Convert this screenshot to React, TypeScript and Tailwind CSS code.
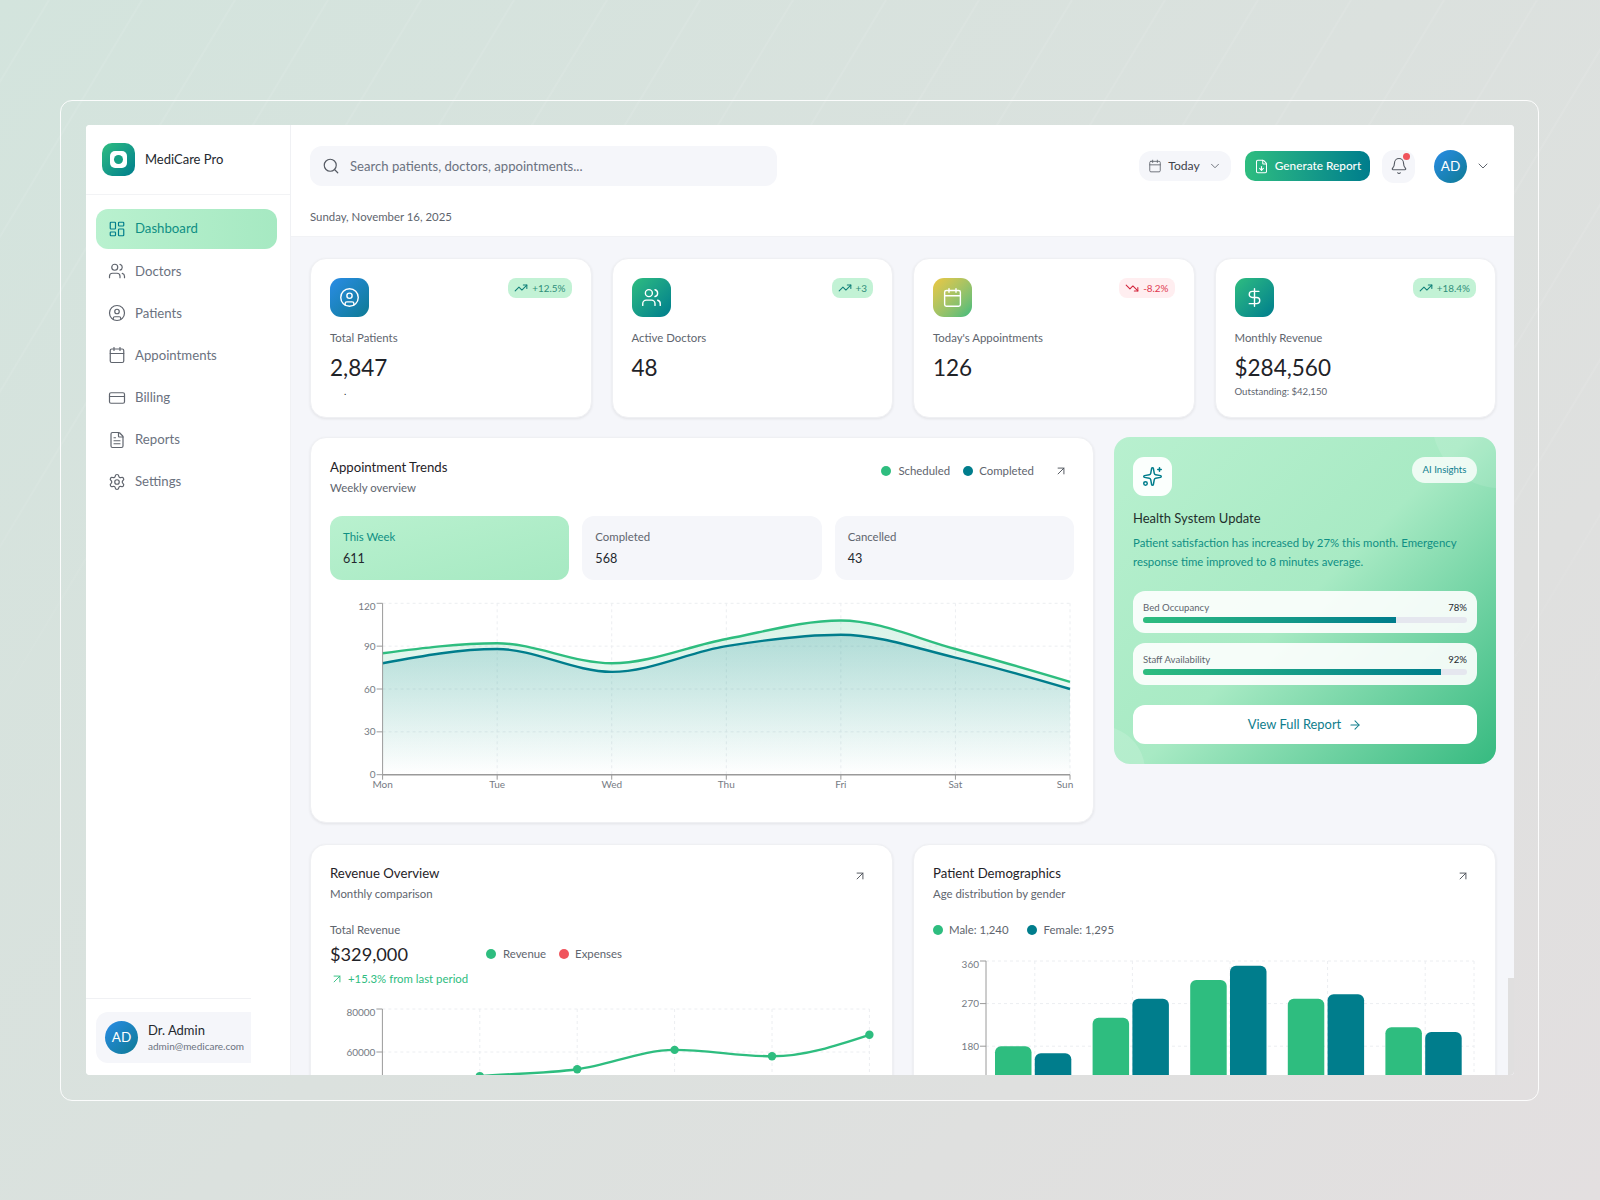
import React from "react";
import {
  LayoutDashboard, Users, CircleUser, Calendar, CreditCard, FileText, Settings, Search, ChevronDown,
  FileDown, Bell, TrendingUp, TrendingDown, DollarSign, Sparkles, ArrowUpRight, ArrowRight,
} from "lucide-react";

type P = [number, number];
function monotone(pts: P[]): string {
  const n = pts.length;
  const t: number[] = new Array(n).fill(0);
  const sign = (v: number) => (v < 0 ? -1 : 1);
  for (let i = 1; i < n - 1; i++) {
    const h0 = pts[i][0] - pts[i - 1][0], h1 = pts[i + 1][0] - pts[i][0];
    const s0 = (pts[i][1] - pts[i - 1][1]) / h0, s1 = (pts[i + 1][1] - pts[i][1]) / h1;
    const p = (s0 * h1 + s1 * h0) / (h0 + h1);
    t[i] = (sign(s0) + sign(s1)) * Math.min(Math.abs(s0), Math.abs(s1), 0.5 * Math.abs(p)) || 0;
  }
  t[0] = (3 * (pts[1][1] - pts[0][1]) / (pts[1][0] - pts[0][0]) - t[1]) / 2;
  t[n - 1] = (3 * (pts[n - 1][1] - pts[n - 2][1]) / (pts[n - 1][0] - pts[n - 2][0]) - t[n - 2]) / 2;
  let d = `M${pts[0][0]},${pts[0][1]}`;
  for (let i = 0; i < n - 1; i++) {
    const dx = (pts[i + 1][0] - pts[i][0]) / 3;
    d += `C${pts[i][0] + dx},${pts[i][1] + dx * t[i]},${pts[i + 1][0] - dx},${pts[i + 1][1] - dx * t[i + 1]},${pts[i + 1][0]},${pts[i + 1][1]}`;
  }
  return d;
}

const GREEN = "#2ebd7f";
const TEAL = "#007d8c";
const GRID = "#eceef1";
const AXIS = "#9a9a9a";
const TICK = "#767b84";

function BackgroundLines() {
  const lines = Array.from({ length: 26 }, (_, i) => -500 + i * 93);
  return (
    <svg className="absolute inset-0" width="1600" height="1200">
      <defs>
        <linearGradient id="bgl" gradientUnits="userSpaceOnUse" x1="0" y1="0" x2="0" y2="760">
          <stop offset="0" stopColor="#ffffff" stopOpacity="0.08" />
          <stop offset="0.55" stopColor="#ffffff" stopOpacity="0.08" />
          <stop offset="1" stopColor="#ffffff" stopOpacity="0" />
        </linearGradient>
      </defs>
      {lines.map((x) => (
        <line key={x} x1={x} y1={760} x2={x + 456} y2={0} stroke="url(#bgl)" strokeWidth="2" />
      ))}
    </svg>
  );
}

const nav = [
  { label: "Dashboard", Icon: LayoutDashboard, active: true },
  { label: "Doctors", Icon: Users },
  { label: "Patients", Icon: CircleUser },
  { label: "Appointments", Icon: Calendar },
  { label: "Billing", Icon: CreditCard },
  { label: "Reports", Icon: FileText },
  { label: "Settings", Icon: Settings },
];

function Sidebar() {
  return (
    <aside className="flex h-full w-[205px] shrink-0 flex-col border-r border-[#f0f1f4] bg-white">
      <div className="flex h-[70px] items-center gap-[10px] border-b border-[#f2f3f5] pl-[16px]">
        <div className="flex h-[33px] w-[33px] items-center justify-center rounded-[10px] bg-gradient-to-br from-[#2ebd7f] to-[#007d8c]">
          <div className="flex h-[17px] w-[17px] items-center justify-center rounded-[5px] bg-white">
            <div className="h-[9px] w-[9px] rounded-full bg-[#17a084]" />
          </div>
        </div>
        <span className="text-[13px] text-[#24282e]">MediCare Pro</span>
      </div>
      <nav className="flex flex-col gap-[2.7px] pl-[10px] pr-[13px] pt-[14px]">
        {nav.map(({ label, Icon, active }) => (
          <div
            key={label}
            className={
              active
                ? "flex h-[39.5px] items-center gap-[9px] rounded-[12px] bg-gradient-to-r from-[#b9f1cf] to-[#a6e9c2] px-[12px] text-[#0f8f84]"
                : "flex h-[39.5px] items-center gap-[9px] rounded-[12px] px-[12px] text-[#6b7280]"
            }
          >
            <Icon size={18} strokeWidth={1.6} className={active ? "text-[#007d8c]" : "text-[#60656e]"} />
            <span className="pt-[1px] text-[13.2px]">{label}</span>
          </div>
        ))}
      </nav>
      <div className="mt-auto w-[165px] border-t border-[#f0f1f4] pt-[13px] pb-[12.5px]">
        <div className="ml-[10px] flex h-[51px] items-center gap-[10px] rounded-l-[12px] bg-[#f5f6fa] pl-[9px]">
          <Avatar />
          <div className="flex flex-col">
            <span className="text-[13px] leading-[18px] text-[#24282e]">Dr. Admin</span>
            <span className="text-[10px] leading-[14px] text-[#6b7280]">admin@medicare.com</span>
          </div>
        </div>
      </div>
    </aside>
  );
}

function Avatar() {
  return (
    <div className="flex h-[33px] w-[33px] shrink-0 items-center justify-center rounded-full bg-gradient-to-br from-[#2a8ce6] to-[#0e7a94] text-[13.5px] text-white">
      AD
    </div>
  );
}

function TopBar() {
  return (
    <header className="h-[112px] shrink-0 border-b border-[#f1f2f5] bg-white pl-[19px] pr-[23px] pt-[21px]">
      <div className="flex items-center justify-between">
        <div className="flex h-[40px] w-[467px] items-center gap-[10px] rounded-[12px] bg-[#f5f6fa] pl-[12px]">
          <Search size={18} strokeWidth={1.6} className="text-[#565b64]" />
          <span className="pt-[1px] text-[13.1px] text-[#6b7280]">Search patients, doctors, appointments...</span>
        </div>
        <div className="flex items-center">
          <div className="flex h-[30px] w-[92px] items-center justify-center gap-[6px] rounded-[12px] bg-[#f5f6fa] text-[12.2px] text-[#3f444c]">
            <Calendar size={14} strokeWidth={1.5} className="text-[#60656e]" />
            <span>Today</span>
            <ChevronDown size={14} strokeWidth={1.5} className="ml-[2px] text-[#60656e]" />
          </div>
          <div className="ml-[14px] flex h-[30px] w-[125px] items-center justify-center gap-[6px] rounded-[10px] bg-gradient-to-r from-[#2ebd7f] to-[#007d8c] text-[11.8px] font-medium text-white">
            <FileDown size={15} strokeWidth={1.7} />
            <span>Generate Report</span>
          </div>
          <div className="relative ml-[12px] flex h-[33px] w-[33px] items-center justify-center rounded-[12px] bg-[#f5f6fa]">
            <Bell size={18} strokeWidth={1.5} className="text-[#565b64]" />
            <span className="absolute right-[5px] top-[3px] h-[7px] w-[7px] rounded-full bg-[#f0545c]" />
          </div>
          <div className="ml-[19px]">
            <Avatar />
          </div>
          <ChevronDown size={16} strokeWidth={1.5} className="ml-[8px] text-[#60656e]" />
        </div>
      </div>
      <p className="mt-[22px] text-[11.4px] leading-[18px] text-[#60656e]">Sunday, November 16, 2025</p>
    </header>
  );
}

const stats = [
  { label: "Total Patients", value: "2,847", badge: "+12.5%", Icon: CircleUser, bg: "bg-gradient-to-br from-[#2a8ce6] to-[#0e7a94]", note: ".", noteCls: "pl-[14px] text-[#24282e]" },
  { label: "Active Doctors", value: "48", badge: "+3", Icon: Users, bg: "bg-gradient-to-br from-[#2ebd7f] to-[#007d8c]" },
  { label: "Today's Appointments", value: "126", badge: "-8.2%", down: true, Icon: Calendar, bg: "bg-gradient-to-br from-[#ecc73e] to-[#36bb7c]" },
  { label: "Monthly Revenue", value: "$284,560", badge: "+18.4%", Icon: DollarSign, bg: "bg-gradient-to-br from-[#2ebd7f] to-[#007d8c]", note: "Outstanding: $42,150", noteCls: "text-[#60656e]" },
];

function StatCard(s: (typeof stats)[number]) {
  const { Icon } = s;
  const down = (s as { down?: boolean }).down;
  const note = (s as { note?: string }).note;
  const noteCls = (s as { noteCls?: string }).noteCls;
  return (
    <div className="h-[160px] rounded-[16px] border border-[#eff0f3] bg-white px-[19px] pt-[19px] shadow-[0_1px_3px_rgba(0,0,0,0.08)]">
      <div className="flex items-start justify-between">
        <div className={`flex h-[39px] w-[39px] items-center justify-center rounded-[11px] text-white ${s.bg}`}>
          <Icon size={21} strokeWidth={1.6} />
        </div>
        <div
          className={
            down
              ? "flex h-[20px] items-center gap-[4px] rounded-[8px] bg-[#ffeef0] px-[6px] text-[9.9px] text-[#e0394f]"
              : "flex h-[20px] items-center gap-[4px] rounded-[8px] bg-[#c2f2d5] px-[6px] text-[9.9px] text-[#2f8f7a]"
          }
        >
          {down ? (
            <TrendingDown size={14} strokeWidth={1.8} className="text-[#d3253c]" />
          ) : (
            <TrendingUp size={14} strokeWidth={1.8} className="text-[#0e7f78]" />
          )}
          <span>{s.badge}</span>
        </div>
      </div>
      <p className="mt-[12px] text-[11.4px] leading-[18px] text-[#60656e]">{s.label}</p>
      <p className="mt-[5px] text-[22.5px] leading-[32px] text-[#1f2328]">{s.value}</p>
      {note && <p className={`mt-[1px] text-[9.6px] leading-[14px] ${noteCls}`}>{note}</p>}
    </div>
  );
}

function Dot({ color }: { color: string }) {
  return <span className="block h-[10px] w-[10px] rounded-full" style={{ backgroundColor: color }} />;
}

function CardHead({ title, sub }: { title: string; sub: string }) {
  return (
    <div>
      <h3 className="text-[13.2px] font-normal leading-[20px] text-[#1f2328]">{title}</h3>
      <p className="mt-[2px] text-[11.4px] leading-[18px] text-[#60656e]">{sub}</p>
    </div>
  );
}

function TrendsChart() {
  const x0 = 52.6, dx = (1070 - 382.6) / 6, top = 7.3, bot = 178.7;
  const y = (v: number) => bot - (v / 120) * (bot - top);
  const sched = [85, 92, 78, 95, 108, 88, 65].map((v, i) => [x0 + i * dx, y(v)] as P);
  const comp = [78, 88, 72, 90, 98, 82, 60].map((v, i) => [x0 + i * dx, y(v)] as P);
  const days = ["Mon", "Tue", "Wed", "Thu", "Fri", "Sat", "Sun"];
  const xEnd = x0 + 6 * dx;
  return (
    <svg width="750" height="200" className="mt-[16px] block">
      <defs>
        <linearGradient id="gs" x1="0" y1="0" x2="0" y2="1">
          <stop offset="0" stopColor={GREEN} stopOpacity="0.18" />
          <stop offset="1" stopColor={GREEN} stopOpacity="0" />
        </linearGradient>
        <linearGradient id="gc" x1="0" y1="0" x2="0" y2="1">
          <stop offset="0" stopColor={TEAL} stopOpacity="0.2" />
          <stop offset="1" stopColor={TEAL} stopOpacity="0" />
        </linearGradient>
      </defs>
      {[120, 90, 60, 30].map((v) => (
        <line key={v} x1={x0} x2={xEnd} y1={y(v)} y2={y(v)} stroke={GRID} strokeDasharray="3 3" />
      ))}
      {days.slice(1).map((_, i) => (
        <line key={i} x1={x0 + (i + 1) * dx} x2={x0 + (i + 1) * dx} y1={top} y2={bot} stroke={GRID} strokeDasharray="3 3" />
      ))}
      <path d={`${monotone(sched)}L${xEnd},${bot}L${x0},${bot}Z`} fill="url(#gs)" />
      <path d={`${monotone(comp)}L${xEnd},${bot}L${x0},${bot}Z`} fill="url(#gc)" />
      <path d={monotone(sched)} fill="none" stroke={GREEN} strokeWidth="2.4" />
      <path d={monotone(comp)} fill="none" stroke={TEAL} strokeWidth="2.4" />
      <line x1={x0} x2={x0} y1={top} y2={bot} stroke={AXIS} />
      <line x1={x0} x2={xEnd} y1={bot} y2={bot} stroke={AXIS} strokeWidth="1.4" />
      {[120, 90, 60, 30, 0].map((v) => (
        <g key={v}>
          <line x1={x0 - 6} x2={x0} y1={y(v)} y2={y(v)} stroke={AXIS} />
          <text x={x0 - 7} y={y(v) + (v === 120 ? 7 : 3.5)} fontSize="10" textAnchor="end" fill={TICK}>{v}</text>
        </g>
      ))}
      {days.map((d, i) => (
        <g key={d}>
          <line x1={x0 + i * dx} x2={x0 + i * dx} y1={bot} y2={bot + 5} stroke={AXIS} />
          <text x={x0 + i * dx - (i === 6 ? 5 : 0)} y={bot + 13} fontSize="10" textAnchor="middle" fill={TICK}>{d}</text>
        </g>
      ))}
    </svg>
  );
}

function Trends() {
  const minis = [
    { label: "This Week", value: "611", active: true },
    { label: "Completed", value: "568" },
    { label: "Cancelled", value: "43" },
  ];
  return (
    <div className="h-[386px] rounded-[16px] border border-[#eff0f3] bg-white px-[19px] pt-[19px] shadow-[0_1px_3px_rgba(0,0,0,0.08)]">
      <div className="flex items-start justify-between">
        <CardHead title="Appointment Trends" sub="Weekly overview" />
        <div className="flex items-center pt-[5px] text-[11.4px] text-[#60656e]">
          <Dot color={GREEN} />
          <span className="ml-[7px]">Scheduled</span>
          <span className="ml-[13px]"><Dot color={TEAL} /></span>
          <span className="ml-[6px]">Completed</span>
          <ArrowUpRight size={14} strokeWidth={1.6} className="ml-[20px] mr-[6px] text-[#4b5058]" />
        </div>
      </div>
      <div className="mt-[19px] grid grid-cols-3 gap-[13px]">
        {minis.map((m) => (
          <div
            key={m.label}
            className={
              m.active
                ? "h-[64px] rounded-[12px] bg-gradient-to-br from-[#b9f1cf] to-[#a6e9c2] px-[13px] pt-[13px]"
                : "h-[64px] rounded-[12px] bg-[#f5f6fa] px-[13px] pt-[13px]"
            }
          >
            <p className={m.active ? "text-[11.4px] leading-[16px] text-[#0f8f84]" : "text-[11.4px] leading-[16px] text-[#60656e]"}>{m.label}</p>
            <p className="mt-[5px] text-[12.6px] leading-[18px] text-[#24282e]">{m.value}</p>
          </div>
        ))}
      </div>
      <TrendsChart />
    </div>
  );
}

function Progress({ label, value }: { label: string; value: number }) {
  return (
    <div className="h-[42px] rounded-[12px] bg-white/90 px-[10px] pt-[10px]">
      <div className="flex justify-between text-[9.6px] leading-[14px]">
        <span className="text-[#60656e]">{label}</span>
        <span className="text-[#24282e]">{value}%</span>
      </div>
      <div className="mt-[2px] h-[6px] overflow-hidden rounded-full bg-[#e5e7ef]">
        <div className="h-full bg-gradient-to-r from-[#2ebd7f] to-[#007d8c]" style={{ width: `${value}%` }} />
      </div>
    </div>
  );
}

function Insights() {
  return (
    <div className="relative h-[327px] overflow-hidden rounded-[16px] bg-[linear-gradient(135deg,#b8f0cf_0%,#a8eac4_50%,#36ba80_100%)] px-[19px] pt-[20px]">
      <div className="absolute -right-[72px] -top-[85px] h-[136px] w-[136px] rounded-full bg-white/10" />
      <div className="absolute -bottom-[52px] -left-[59px] h-[90px] w-[90px] rounded-full bg-white/15" />
      <div className="relative">
        <div className="flex items-start justify-between">
          <div className="flex h-[39px] w-[39px] items-center justify-center rounded-[11px] bg-white/95 text-[#007d8c]">
            <Sparkles size={21} strokeWidth={1.7} />
          </div>
          <span className="flex h-[26px] w-[65px] items-center justify-center rounded-full bg-white/80 text-[9.6px] text-[#0f8090]">AI Insights</span>
        </div>
        <h3 className="mt-[12px] text-[13px] font-normal leading-[20px] text-[#1f2f2c]">Health System Update</h3>
        <p className="mt-[6px] text-[11.4px] leading-[18.5px] text-[#0f8f84]">
          Patient satisfaction has increased by 27% this month. Emergency response time improved to 8 minutes average.
        </p>
        <div className="mt-[20px] flex flex-col gap-[10px]">
          <Progress label="Bed Occupancy" value={78} />
          <Progress label="Staff Availability" value={92} />
        </div>
        <div className="mt-[20px] flex h-[39px] items-center justify-center gap-[7px] rounded-[12px] bg-white text-[12.9px] text-[#0f7d8c]">
          <span>View Full Report</span>
          <ArrowRight size={14} strokeWidth={1.8} />
        </div>
      </div>
    </div>
  );
}

function RevenueChart() {
  const x0 = 52.4, dx = 97.4, top = 9;
  const y = (v: number) => top + ((80000 - v) * 43) / 20000;
  const rev = [45000, 48800, 52000, 61000, 58000, 68000];
  const pts = rev.map((v, i) => [x0 + i * dx, y(v)] as P);
  const xEnd = x0 + 5 * dx;
  return (
    <svg width="550" height="110" className="mt-[12px] block">
      {[80000, 60000, 40000].map((v) => (
        <line key={v} x1={x0} x2={xEnd} y1={y(v)} y2={y(v)} stroke={GRID} strokeDasharray="3 3" />
      ))}
      {[1, 2, 3, 4, 5].map((i) => (
        <line key={i} x1={x0 + i * dx} x2={x0 + i * dx} y1={top} y2={110} stroke={GRID} strokeDasharray="3 3" />
      ))}
      <line x1={x0} x2={x0} y1={top} y2={110} stroke={AXIS} />
      {[80000, 60000].map((v) => (
        <g key={v}>
          <line x1={x0 - 6} x2={x0} y1={y(v)} y2={y(v)} stroke={AXIS} />
          <text x={x0 - 7} y={y(v) + (v === 80000 ? 7 : 3.5)} fontSize="10" textAnchor="end" fill={TICK}>{v}</text>
        </g>
      ))}
      <path d={monotone(pts)} fill="none" stroke={GREEN} strokeWidth="2.4" />
      {pts.map((p, i) => (
        <circle key={i} cx={p[0]} cy={p[1]} r="4.2" fill={GREEN} />
      ))}
    </svg>
  );
}

function Revenue() {
  return (
    <div className="relative h-[300px] rounded-[16px] border border-[#eff0f3] bg-white px-[19px] pt-[18px] shadow-[0_1px_3px_rgba(0,0,0,0.08)]">
      <div className="flex items-start justify-between">
        <CardHead title="Revenue Overview" sub="Monthly comparison" />
        <ArrowUpRight size={14} strokeWidth={1.6} className="mr-[6px] mt-[6px] text-[#4b5058]" />
      </div>
      <p className="mt-[19px] text-[11.4px] leading-[16px] text-[#60656e]">Total Revenue</p>
      <div className="mt-[2px] flex items-center">
        <span className="w-[156px] text-[18.2px] leading-[28px] text-[#1f2328]">$329,000</span>
        <div className="flex items-center text-[11.4px] text-[#60656e]">
          <Dot color={GREEN} />
          <span className="ml-[7px]">Revenue</span>
          <span className="ml-[13px]"><Dot color="#f0545c" /></span>
          <span className="ml-[6px]">Expenses</span>
        </div>
      </div>
      <div className="mt-[2px] flex items-center gap-[4px] text-[11.4px] leading-[18px] text-[#2ebd7f]">
        <ArrowUpRight size={14} strokeWidth={1.6} />
        <span>+15.3% from last period</span>
      </div>
      <RevenueChart />
    </div>
  );
}

function DemoChart() {
  const x0 = 53, dx = 97.6, top = 9;
  const y = (v: number) => top + ((360 - v) * 42.6) / 90;
  const xEnd = x0 + 5 * dx;
  const data = [[180, 165], [240, 280], [320, 350], [280, 290], [220, 210]];
  const h = 190;
  return (
    <svg width="550" height={h} className="mt-[14px] block">
      {[360, 270, 180, 90].map((v) => (
        <line key={v} x1={x0} x2={xEnd} y1={y(v)} y2={y(v)} stroke={GRID} strokeDasharray="3 3" />
      ))}
      {[0.5, 1.5, 2.5, 3.5, 4.5, 5].map((i) => (
        <line key={i} x1={x0 + i * dx} x2={x0 + i * dx} y1={top} y2={h} stroke={GRID} strokeDasharray="3 3" />
      ))}
      <line x1={x0} x2={x0} y1={top} y2={h} stroke={AXIS} />
      {[360, 270, 180].map((v) => (
        <g key={v}>
          <line x1={x0 - 6} x2={x0} y1={y(v)} y2={y(v)} stroke={AXIS} />
          <text x={x0 - 7} y={y(v) + (v === 360 ? 7 : 3.5)} fontSize="10" textAnchor="end" fill={TICK}>{v}</text>
        </g>
      ))}
      {data.map(([m, f], i) => (
        <g key={i}>
          <rect x={x0 + 9 + i * dx} y={y(m)} width="36.5" height={h} rx="6" fill={GREEN} />
          <rect x={x0 + 48.8 + i * dx} y={y(f)} width="36.5" height={h} rx="6" fill={TEAL} />
        </g>
      ))}
    </svg>
  );
}

function Demographics() {
  return (
    <div className="h-[300px] rounded-[16px] border border-[#eff0f3] bg-white px-[19px] pt-[18px] shadow-[0_1px_3px_rgba(0,0,0,0.08)]">
      <div className="flex items-start justify-between">
        <CardHead title="Patient Demographics" sub="Age distribution by gender" />
        <ArrowUpRight size={14} strokeWidth={1.6} className="mr-[6px] mt-[6px] text-[#4b5058]" />
      </div>
      <div className="mt-[19px] flex h-[16px] items-center text-[11.4px] text-[#60656e]">
        <Dot color={GREEN} />
        <span className="ml-[6px]">Male: 1,240</span>
        <span className="ml-[18px]"><Dot color={TEAL} /></span>
        <span className="ml-[7px]">Female: 1,295</span>
      </div>
      <DemoChart />
    </div>
  );
}

export default function App() {
  return (
    <div className="relative h-[1200px] w-[1600px] overflow-hidden bg-[linear-gradient(135deg,#d3e4dd_0%,#dbe1de_50%,#e3dfe0_100%)] pl-[60px] pt-[100px] font-['Lato',sans-serif]">
      <BackgroundLines />
      <div className="relative h-[1001px] w-[1479px] rounded-[12px] border border-white/90 px-[25px] pt-[24px]">
        <div className="relative flex h-[950px] w-[1428px] overflow-hidden rounded-[4px] bg-white">
          <Sidebar />
          <main className="flex min-w-0 flex-1 flex-col bg-[#f5f6fa]">
            <TopBar />
            <div className="flex flex-col gap-[20px] pl-[19px] pr-[18px] pt-[21px]">
              <div className="grid grid-cols-4 gap-[20px]">
                {stats.map((s) => (
                  <StatCard key={s.label} {...s} />
                ))}
              </div>
              <div className="-mt-[1px] grid grid-cols-[784px_382px] items-start gap-[20px]">
                <Trends />
                <Insights />
              </div>
              <div className="grid grid-cols-2 gap-[20px] pt-[1px]">
                <Revenue />
                <Demographics />
              </div>
            </div>
          </main>
          <div className="absolute bottom-0 right-0 h-[97px] w-[6px] bg-[#e0dfdf]" />
        </div>
      </div>
    </div>
  );
}
